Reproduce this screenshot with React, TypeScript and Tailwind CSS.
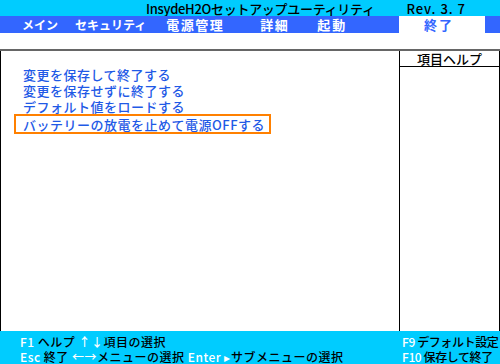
import React from "react";

const FONT = { fontFamily: '"Noto Sans CJK JP", "Liberation Sans", sans-serif' };

// tab labels: kana ones are drawn narrower than the kanji ones on the real screen
const TABS = [
  { label: "メイン", cls: "ml-[22px] text-[12px]" },
  { label: "セキュリティ", cls: "ml-[17px] text-[12px]" },
  { label: "電源管理", cls: "ml-[20px] tracking-[1.5px]" },
  { label: "詳細", cls: "ml-[36px] tracking-[1.5px]" },
  { label: "起動", cls: "ml-[28px] tracking-[2px]" },
];

const ITEMS = ["変更を保存して終了する", "変更を保存せずに終了する", "デフォルト値をロードする"];

export default function App() {
  return (
    <div className="flex h-[364px] w-[500px] flex-col overflow-hidden bg-white text-[13px] leading-none" style={FONT}>
      {/* title bar */}
      <div className="flex h-[16px] items-center bg-[#00ccff] font-medium text-black">
        <span className="ml-[146px] tracking-[-0.3px]">InsydeH2Oセットアップユーティリティ</span>
        <span className="ml-auto mr-[34px] tracking-[1px]">Rev. 3. 7</span>
      </div>

      {/* tabs */}
      <div className="flex h-[17px] items-center bg-[#3366ff] font-bold text-white">
        {TABS.map((t) => (
          <span key={t.label} className={t.cls}>
            {t.label}
          </span>
        ))}
        <span className="ml-auto mr-[15px] flex h-full w-[86px] items-center bg-white pl-[25px] tracking-[2px] text-[#3366ff]">
          終了
        </span>
      </div>

      <div className="h-[16px] bg-white" />
      <div className="h-[2px] bg-[#666666]" />

      {/* main */}
      <div className="flex h-[280px] border-x border-black">
        <div className="flex-1 pl-[13px] pt-[15px] font-medium tracking-[0.5px] text-[#1f5ae6]">
          {ITEMS.map((it) => (
            <div key={it} className="flex h-[16px] items-center pl-[9px]">
              {it}
            </div>
          ))}
          <div className="flex h-[20px] w-[257px] items-center border-2 border-[#ff8000] pl-[7px]">
            バッテリーの放電を止めて電源OFFする
          </div>
        </div>
        <div className="w-[100px] border-l border-black">
          <div className="flex h-[16px] items-center justify-center border-b border-black font-medium text-black">
            項目ヘルプ
          </div>
        </div>
      </div>

      {/* footer */}
      <div className="flex h-[33px] bg-[#00ccff] pt-[3px] text-[12px] font-medium text-black">
        <div className="flex-1 pl-[20px] tracking-[0.5px]">
          <div className="flex h-[15px] items-center">
            <span className="text-white">F1</span>&nbsp;ヘルプ&nbsp;<span className="text-white">↑↓</span>項目の選択
          </div>
          <div className="flex h-[15px] items-center whitespace-nowrap">
            <span className="text-white">Esc</span>&nbsp;終了&nbsp;<span className="text-white">←→</span>メニューの選択&nbsp;
            <span className="text-white">Enter&nbsp;▸</span>サブメニューの選択
          </div>
        </div>
        <div className="w-[98px] whitespace-nowrap tracking-[-0.4px]">
          <div className="flex h-[15px] items-center">
            <span className="text-white">F9</span>&nbsp;デフォルト設定
          </div>
          <div className="flex h-[15px] items-center">
            <span className="text-white">F10</span>&nbsp;保存して終了
          </div>
        </div>
      </div>
    </div>
  );
}
